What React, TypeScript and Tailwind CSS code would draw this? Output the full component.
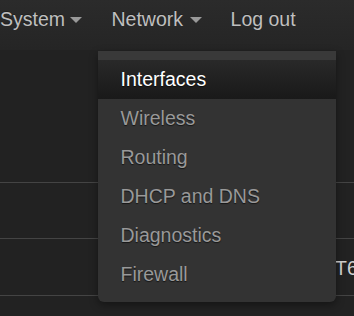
import { ReactNode } from 'react';

const menu = ['Interfaces', 'Wireless', 'Routing', 'DHCP and DNS', 'Diagnostics', 'Firewall'];

function Caret({ className = '' }: { className?: string }) {
  return <span className={`mt-px inline-block h-0 w-0 border-x-[6px] border-t-[6px] border-x-transparent border-t-[#999] ${className}`} />;
}

function NavItem({ children, className = '' }: { children: ReactNode; className?: string }) {
  return <div className={`flex items-center ${className}`}>{children}</div>;
}

export default function App() {
  return (
    <div className="relative h-[316px] w-[354px] overflow-hidden bg-[#222] font-['Liberation_Sans',Arial,sans-serif] text-[19.5px]">
      <header className="h-[50px] bg-gradient-to-b from-[#2b2b2b] to-[#252525]">
        <nav className="flex items-center pt-[5px] leading-[28.5px] text-[#bfbfbf] [text-shadow:0_-1px_0_rgba(0,0,0,0.25)]">
          <NavItem>
            <span>System</span>
            <Caret className="ml-[5px]" />
          </NavItem>
          <NavItem className="ml-[29.5px]">
            <span>Network</span>
            <Caret className="ml-[7px]" />
          </NavItem>
          <NavItem className="ml-[28.5px]">
            <span>Log out</span>
          </NavItem>
        </nav>
      </header>

      <div className="h-[132px]" />
      <div className="h-[56px] border-t border-[#444]" />
      <div className="flex h-[57px] items-center border-t border-[#444] pl-[335px] whitespace-nowrap text-[#d0d0d0]">
        <span className="mt-[4px]">T6</span>
      </div>
      <div className="border-t border-[#444]" />

      <ul className="absolute left-[98px] top-[51px] w-[238px] rounded-b-[6px] bg-[#333] pt-[9px] pb-[8px] shadow-[0_3px_8px_rgba(0,0,0,0.4)]">
        <li className="absolute inset-x-0 top-0 h-[9px] bg-[#393939]" />
        {menu.map((item, i) => (
          <li
            key={item}
            className={`px-[22.5px] py-[6px] leading-[27px] [text-shadow:0_1px_1px_rgba(0,0,0,0.6)] ${
              i === 0 ? 'bg-gradient-to-b from-[#292929] to-[#191919] text-white' : 'text-[#999]'
            }`}
          >
            {item}
          </li>
        ))}
      </ul>
    </div>
  );
}
